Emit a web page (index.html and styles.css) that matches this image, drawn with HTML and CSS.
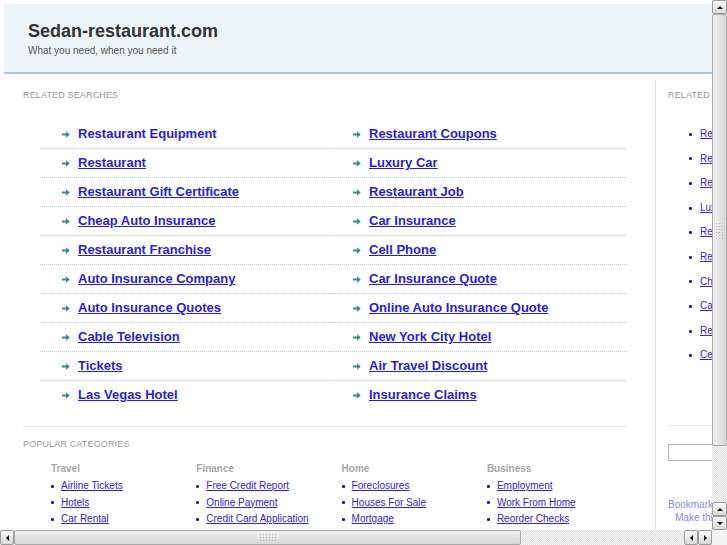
FILE: index.html
```html
<!DOCTYPE html>
<html lang="en">
<head>
<meta charset="utf-8">
<title>Sedan-restaurant.com</title>
<link rel="stylesheet" href="styles.css">
</head>
<body>
<div class="viewport">
  <div class="page">
    <header class="header">
      <h1 class="title">Sedan-restaurant.com</h1>
      <p class="tagline">What you need, when you need it</p>
    </header>
    <div class="main">
      <div class="content">
        <h2 class="section-title">Related Searches</h2>
        <ul class="searches">
          <li><svg class="arrow" viewBox="0 0 8 7"><path d="M0 2.6h4V0.3L7.8 3.5 4 6.7V4.4H0z"/></svg><a class="plain" href="#">Restaurant Equipment</a></li>
          <li><svg class="arrow" viewBox="0 0 8 7"><path d="M0 2.6h4V0.3L7.8 3.5 4 6.7V4.4H0z"/></svg><a href="#">Restaurant Coupons</a></li>
          <li><svg class="arrow" viewBox="0 0 8 7"><path d="M0 2.6h4V0.3L7.8 3.5 4 6.7V4.4H0z"/></svg><a href="#">Restaurant</a></li>
          <li><svg class="arrow" viewBox="0 0 8 7"><path d="M0 2.6h4V0.3L7.8 3.5 4 6.7V4.4H0z"/></svg><a href="#">Luxury Car</a></li>
          <li><svg class="arrow" viewBox="0 0 8 7"><path d="M0 2.6h4V0.3L7.8 3.5 4 6.7V4.4H0z"/></svg><a href="#">Restaurant Gift Certificate</a></li>
          <li><svg class="arrow" viewBox="0 0 8 7"><path d="M0 2.6h4V0.3L7.8 3.5 4 6.7V4.4H0z"/></svg><a href="#">Restaurant Job</a></li>
          <li><svg class="arrow" viewBox="0 0 8 7"><path d="M0 2.6h4V0.3L7.8 3.5 4 6.7V4.4H0z"/></svg><a href="#">Cheap Auto Insurance</a></li>
          <li><svg class="arrow" viewBox="0 0 8 7"><path d="M0 2.6h4V0.3L7.8 3.5 4 6.7V4.4H0z"/></svg><a href="#">Car Insurance</a></li>
          <li><svg class="arrow" viewBox="0 0 8 7"><path d="M0 2.6h4V0.3L7.8 3.5 4 6.7V4.4H0z"/></svg><a href="#">Restaurant Franchise</a></li>
          <li><svg class="arrow" viewBox="0 0 8 7"><path d="M0 2.6h4V0.3L7.8 3.5 4 6.7V4.4H0z"/></svg><a href="#">Cell Phone</a></li>
          <li><svg class="arrow" viewBox="0 0 8 7"><path d="M0 2.6h4V0.3L7.8 3.5 4 6.7V4.4H0z"/></svg><a href="#">Auto Insurance Company</a></li>
          <li><svg class="arrow" viewBox="0 0 8 7"><path d="M0 2.6h4V0.3L7.8 3.5 4 6.7V4.4H0z"/></svg><a href="#">Car Insurance Quote</a></li>
          <li><svg class="arrow" viewBox="0 0 8 7"><path d="M0 2.6h4V0.3L7.8 3.5 4 6.7V4.4H0z"/></svg><a href="#">Auto Insurance Quotes</a></li>
          <li><svg class="arrow" viewBox="0 0 8 7"><path d="M0 2.6h4V0.3L7.8 3.5 4 6.7V4.4H0z"/></svg><a href="#">Online Auto Insurance Quote</a></li>
          <li><svg class="arrow" viewBox="0 0 8 7"><path d="M0 2.6h4V0.3L7.8 3.5 4 6.7V4.4H0z"/></svg><a href="#">Cable Television</a></li>
          <li><svg class="arrow" viewBox="0 0 8 7"><path d="M0 2.6h4V0.3L7.8 3.5 4 6.7V4.4H0z"/></svg><a href="#">New York City Hotel</a></li>
          <li><svg class="arrow" viewBox="0 0 8 7"><path d="M0 2.6h4V0.3L7.8 3.5 4 6.7V4.4H0z"/></svg><a href="#">Tickets</a></li>
          <li><svg class="arrow" viewBox="0 0 8 7"><path d="M0 2.6h4V0.3L7.8 3.5 4 6.7V4.4H0z"/></svg><a href="#">Air Travel Discount</a></li>
          <li><svg class="arrow" viewBox="0 0 8 7"><path d="M0 2.6h4V0.3L7.8 3.5 4 6.7V4.4H0z"/></svg><a href="#">Las Vegas Hotel</a></li>
          <li><svg class="arrow" viewBox="0 0 8 7"><path d="M0 2.6h4V0.3L7.8 3.5 4 6.7V4.4H0z"/></svg><a href="#">Insurance Claims</a></li>
        </ul>
        <div class="rule"></div>
        <h2 class="section-title">Popular Categories</h2>
        <div class="cats">
          <div class="cat">
            <h3>Travel</h3>
            <ul>
              <li><a href="#">Airline Tickets</a></li>
              <li><a href="#">Hotels</a></li>
              <li><a href="#">Car Rental</a></li>
            </ul>
          </div>
          <div class="cat">
            <h3>Finance</h3>
            <ul>
              <li><a href="#">Free Credit Report</a></li>
              <li><a href="#">Online Payment</a></li>
              <li><a href="#">Credit Card Application</a></li>
            </ul>
          </div>
          <div class="cat">
            <h3>Home</h3>
            <ul>
              <li><a href="#">Foreclosures</a></li>
              <li><a href="#">Houses For Sale</a></li>
              <li><a href="#">Mortgage</a></li>
            </ul>
          </div>
          <div class="cat">
            <h3>Business</h3>
            <ul>
              <li><a href="#">Employment</a></li>
              <li><a href="#">Work From Home</a></li>
              <li><a href="#">Reorder Checks</a></li>
            </ul>
          </div>
        </div>
      </div>
      <aside class="side">
        <h2 class="section-title">Related Searches</h2>
        <ul class="side-list">
          <li><a href="#">Restaurant Equipment</a></li>
          <li><a href="#">Restaurant Coupons</a></li>
          <li><a href="#">Restaurant</a></li>
          <li><a href="#">Luxury Car</a></li>
          <li><a href="#">Restaurant Gift Certificate</a></li>
          <li><a href="#">Restaurant Job</a></li>
          <li><a href="#">Cheap Auto Insurance</a></li>
          <li><a href="#">Car Insurance</a></li>
          <li><a href="#">Restaurant Franchise</a></li>
          <li><a href="#">Cell Phone</a></li>
        </ul>
        <div class="side-rule"></div>
        <input class="search-box" type="text" aria-label="Search">
        <p class="bookmark">Bookmark this page</p>
        <p class="makehome">Make this your homepage</p>
      </aside>
    </div>
  </div>
</div>

<div class="vscroll">
  <div class="sb-btn"><span class="tri-up"></span></div>
  <div class="sb-thumb-v"><span class="grip-v"></span></div>
  <div class="sb-track"></div>
  <div class="sb-btn"><span class="tri-up"></span></div>
  <div class="sb-btn"><span class="tri-down"></span></div>
</div>
<div class="hscroll">
  <div class="sb-btn-h"><span class="tri-left"></span></div>
  <div class="sb-thumb-h"><span class="grip-h"></span></div>
  <div class="sb-track"></div>
  <div class="sb-btn-h"><span class="tri-left"></span></div>
  <div class="sb-btn-h"><span class="tri-right"></span></div>
</div>
<div class="sb-corner"></div>
</body>
</html>
```
FILE: styles.css
```css
* { box-sizing: border-box; }
html, body { margin: 0; padding: 0; overflow: hidden; background: #fff; }
body { font-family: "Liberation Sans", Arial, sans-serif; color: #333; }
ul { list-style: none; margin: 0; padding: 0; }
h1, h2, h3, p { margin: 0; }

.viewport { width: 712px; height: 530px; overflow: hidden; }
.page { width: 936px; padding: 4px 0 0 4px; }

.header {
  height: 70px;
  background: #eef5f8;
  border-bottom: 2px solid #aec2e7;
  padding: 16px 0 0 24px;
}
.title { font-size: 18px; line-height: 22px; font-weight: bold; color: #333; }
.tagline { font-size: 10px; line-height: 13px; color: #555; margin-top: 2px; }

.main { display: flex; margin-top: 6px; }
.content { width: 652px; flex: none; padding: 10px 0 0 19px; border-right: 1px solid #dce5f2; min-height: 480px; }
.section-title { font-size: 9px; line-height: 11px; font-weight: normal; text-transform: uppercase; color: #9a9a9a; letter-spacing: 0.15px; }

.searches {
  display: grid;
  grid-template-columns: 291px 296px;
  margin: 19px 0 0 17px;
  width: 587px;
}
.searches li {
  display: flex;
  align-items: center;
  padding: 6px 0 6px 22px;
  line-height: 16px;
  border-bottom: 1px dotted #b9cae6;
}
.searches li:nth-last-child(-n+2) { border-bottom-color: transparent; }
.arrow { width: 8px; height: 7px; margin-right: 8px; fill: #3b8a85; flex: none; }
.searches a { font-size: 13px; font-weight: bold; color: #2b1dd0; text-decoration: underline; }
.searches a.plain { text-decoration: none; }

.rule { width: 604px; height: 1px; background: #dfe7f3; margin-top: 16px; margin-bottom: 12px; }

.cats { display: grid; grid-template-columns: repeat(4, 145.3px); margin: 12px 0 0 28px; }
.cat h3 { font-size: 10px; line-height: 14px; font-weight: bold; color: #a8a8a8; }
.cat ul { margin-top: 2px; }
.cat li, .side-list li { display: flex; align-items: center; }
.cat li { line-height: 16.5px; }
.cat li::before, .side-list li::before {
  content: ""; width: 3px; height: 3px; border-radius: 1px; background: #1f1f9e; margin-right: 7px; flex: none;
}
.cat a, .side-list a { font-size: 10px; color: #3423d8; text-decoration: underline; white-space: nowrap; }

.side { flex: 1; padding: 10px 0 0 12px; }
.side-list { margin-top: 21px; padding-left: 21px; }
.side-list li { line-height: 24.6px; }
.side-list li::before { margin-right: 8px; }
.side-rule { height: 1px; background: #dfe7f3; margin-top: 57px; width: 200px; }
.search-box { display: block; margin-top: 18px; width: 200px; height: 17px; border: 1px solid #b4b4b4; background: #fff; padding: 0; }
.bookmark, .makehome { font-size: 10px; line-height: 13px; color: #8e8edc; white-space: nowrap; }
.bookmark { margin-top: 37px; }
.makehome { padding-left: 7px; }

/* emulated browser scrollbars */
.vscroll {
  position: fixed; top: 0; right: 0; width: 15px; height: 530px;
  display: flex; flex-direction: column;
  background: repeating-conic-gradient(#e2e2e2 0 25%, #f5f5f5 0 50%) 0 0 / 2px 2px;
}
.hscroll {
  position: fixed; left: 0; bottom: 0; width: 712px; height: 15px;
  display: flex;
  background: repeating-conic-gradient(#e2e2e2 0 25%, #f5f5f5 0 50%) 0 0 / 2px 2px;
}
.sb-corner { position: fixed; right: 0; bottom: 0; width: 15px; height: 15px; background: #f4f4f4; }
.sb-track { flex: 1; }
.sb-btn, .sb-btn-h {
  display: flex; align-items: center; justify-content: center;
  border: 1px solid #9c9c9c; border-radius: 2px;
  background: linear-gradient(#fbfbfb, #dadada);
  flex: none;
}
.sb-btn { width: 15px; height: 14px; }
.sb-btn-h { width: 14px; height: 15px; }
.sb-thumb-v {
  height: 432px; flex: none; border: 1px solid #a9a9a9; border-radius: 2px;
  background: linear-gradient(to right, #f0f0f0, #d7d7d7);
  display: flex; align-items: center; justify-content: center;
}
.sb-thumb-h {
  width: 507px; flex: none; border: 1px solid #a9a9a9; border-radius: 2px;
  background: linear-gradient(#f0f0f0, #d7d7d7);
  display: flex; align-items: center; justify-content: center;
}
.grip-v { width: 9px; height: 17px; background: radial-gradient(circle, #b8b8b8 0.7px, transparent 0.8px) 0 0 / 3px 3px; }
.grip-h { width: 17px; height: 9px; background: radial-gradient(circle, #b8b8b8 0.7px, transparent 0.8px) 0 0 / 3px 3px; }
.tri-up { width: 0; height: 0; border-left: 3px solid transparent; border-right: 3px solid transparent; border-bottom: 3px solid #111; }
.tri-down { width: 0; height: 0; border-left: 3px solid transparent; border-right: 3px solid transparent; border-top: 3px solid #111; }
.tri-left { width: 0; height: 0; border-top: 3px solid transparent; border-bottom: 3px solid transparent; border-right: 3px solid #111; }
.tri-right { width: 0; height: 0; border-top: 3px solid transparent; border-bottom: 3px solid transparent; border-left: 3px solid #111; }
```
